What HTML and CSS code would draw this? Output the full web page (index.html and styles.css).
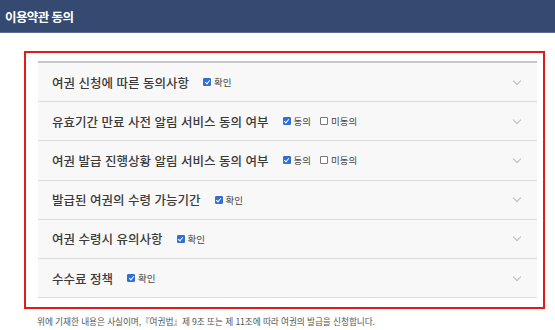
FILE: index.html
```html
<!DOCTYPE html>
<html lang="ko">
<head>
<meta charset="utf-8">
<link rel="stylesheet" href="styles.css">
</head>
<body>
<header class="topbar"><h1 class="title">이용약관 동의</h1></header>
<main class="content">
  <section class="highlight">
    <ul class="terms">
      <li class="row"><span class="label">여권 신청에 따른 동의사항</span><span class="opts"><span class="opt"><span class="cb on"></span>확인</span></span><span class="chev"></span></li>
      <li class="row"><span class="label">유효기간 만료 사전 알림 서비스 동의 여부</span><span class="opts"><span class="opt"><span class="cb on"></span>동의</span><span class="opt"><span class="cb"></span>미동의</span></span><span class="chev"></span></li>
      <li class="row"><span class="label">여권 발급 진행상황 알림 서비스 동의 여부</span><span class="opts"><span class="opt"><span class="cb on"></span>동의</span><span class="opt"><span class="cb"></span>미동의</span></span><span class="chev"></span></li>
      <li class="row"><span class="label">발급된 여권의 수령 가능기간</span><span class="opts"><span class="opt"><span class="cb on"></span>확인</span></span><span class="chev"></span></li>
      <li class="row"><span class="label">여권 수령시 유의사항</span><span class="opts"><span class="opt"><span class="cb on"></span>확인</span></span><span class="chev"></span></li>
      <li class="row"><span class="label">수수료 정책</span><span class="opts"><span class="opt"><span class="cb on"></span>확인</span></span><span class="chev"></span></li>
    </ul>
  </section>
  <p class="note">위에 기재한 내용은 사실이며,『여권법』제 9조 또는 제 11조에 따라 여권의 발급을 신청합니다.</p>
</main>
</body>
</html>
```
FILE: styles.css
```css
* { box-sizing: border-box; }
html, body { margin: 0; padding: 0; background: #fff; }
body { font-family: "Noto Sans CJK KR", "Noto Sans", sans-serif; color: #333; }
.topbar {
  height: 33px;
  background: #344a71;
  border-bottom: 1px solid #5a6f92;
  display: flex;
  align-items: center;
  padding-left: 5px;
}
.title { margin: 0; font-size: 12.5px; font-weight: 700; color: #fff; letter-spacing: -0.6px; }
.content { padding: 18px 10px 0 24px; }
.highlight {
  width: 521px;
  border: 2px solid #e21a1a;
  padding: 8px 6px 9px 12px;
}
.terms {
  list-style: none;
  margin: 0;
  padding: 0;
  border-top: 2px solid #c3c6cd;
}
.row {
  height: 39.2px;
  background: #f8f8f8;
  border-bottom: 1px solid #dcdcdc;
  display: flex;
  align-items: center;
  padding: 0 17px 0 14px;
}
.label { font-size: 12.5px; font-weight: 500; color: #3a3a3a; letter-spacing: 0; }
.opts { display: flex; gap: 9px; margin-left: 14px; }
.opt { display: flex; align-items: center; font-size: 9.5px; color: #444; }
.cb {
  width: 8px; height: 8px;
  border: 1px solid #777;
  background: #fff;
  border-radius: 1px;
  margin-right: 3px;
  position: relative;
}
.cb.on { background: #2f6fd6; border-color: #2f6fd6; }
.cb.on::after {
  content: "";
  position: absolute;
  left: 1.5px; top: 0px;
  width: 2px; height: 4px;
  border: solid #fff;
  border-width: 0 1.2px 1.2px 0;
  transform: rotate(40deg);
}
.chev {
  margin-left: auto;
  width: 6px; height: 6px;
  border: solid #bbb;
  border-width: 0 1px 1px 0;
  transform: rotate(45deg);
  margin-top: -3px;
}
.note { margin: 6px 0 0 13px; font-size: 8.7px; color: #555; letter-spacing: -0.1px; }
```
